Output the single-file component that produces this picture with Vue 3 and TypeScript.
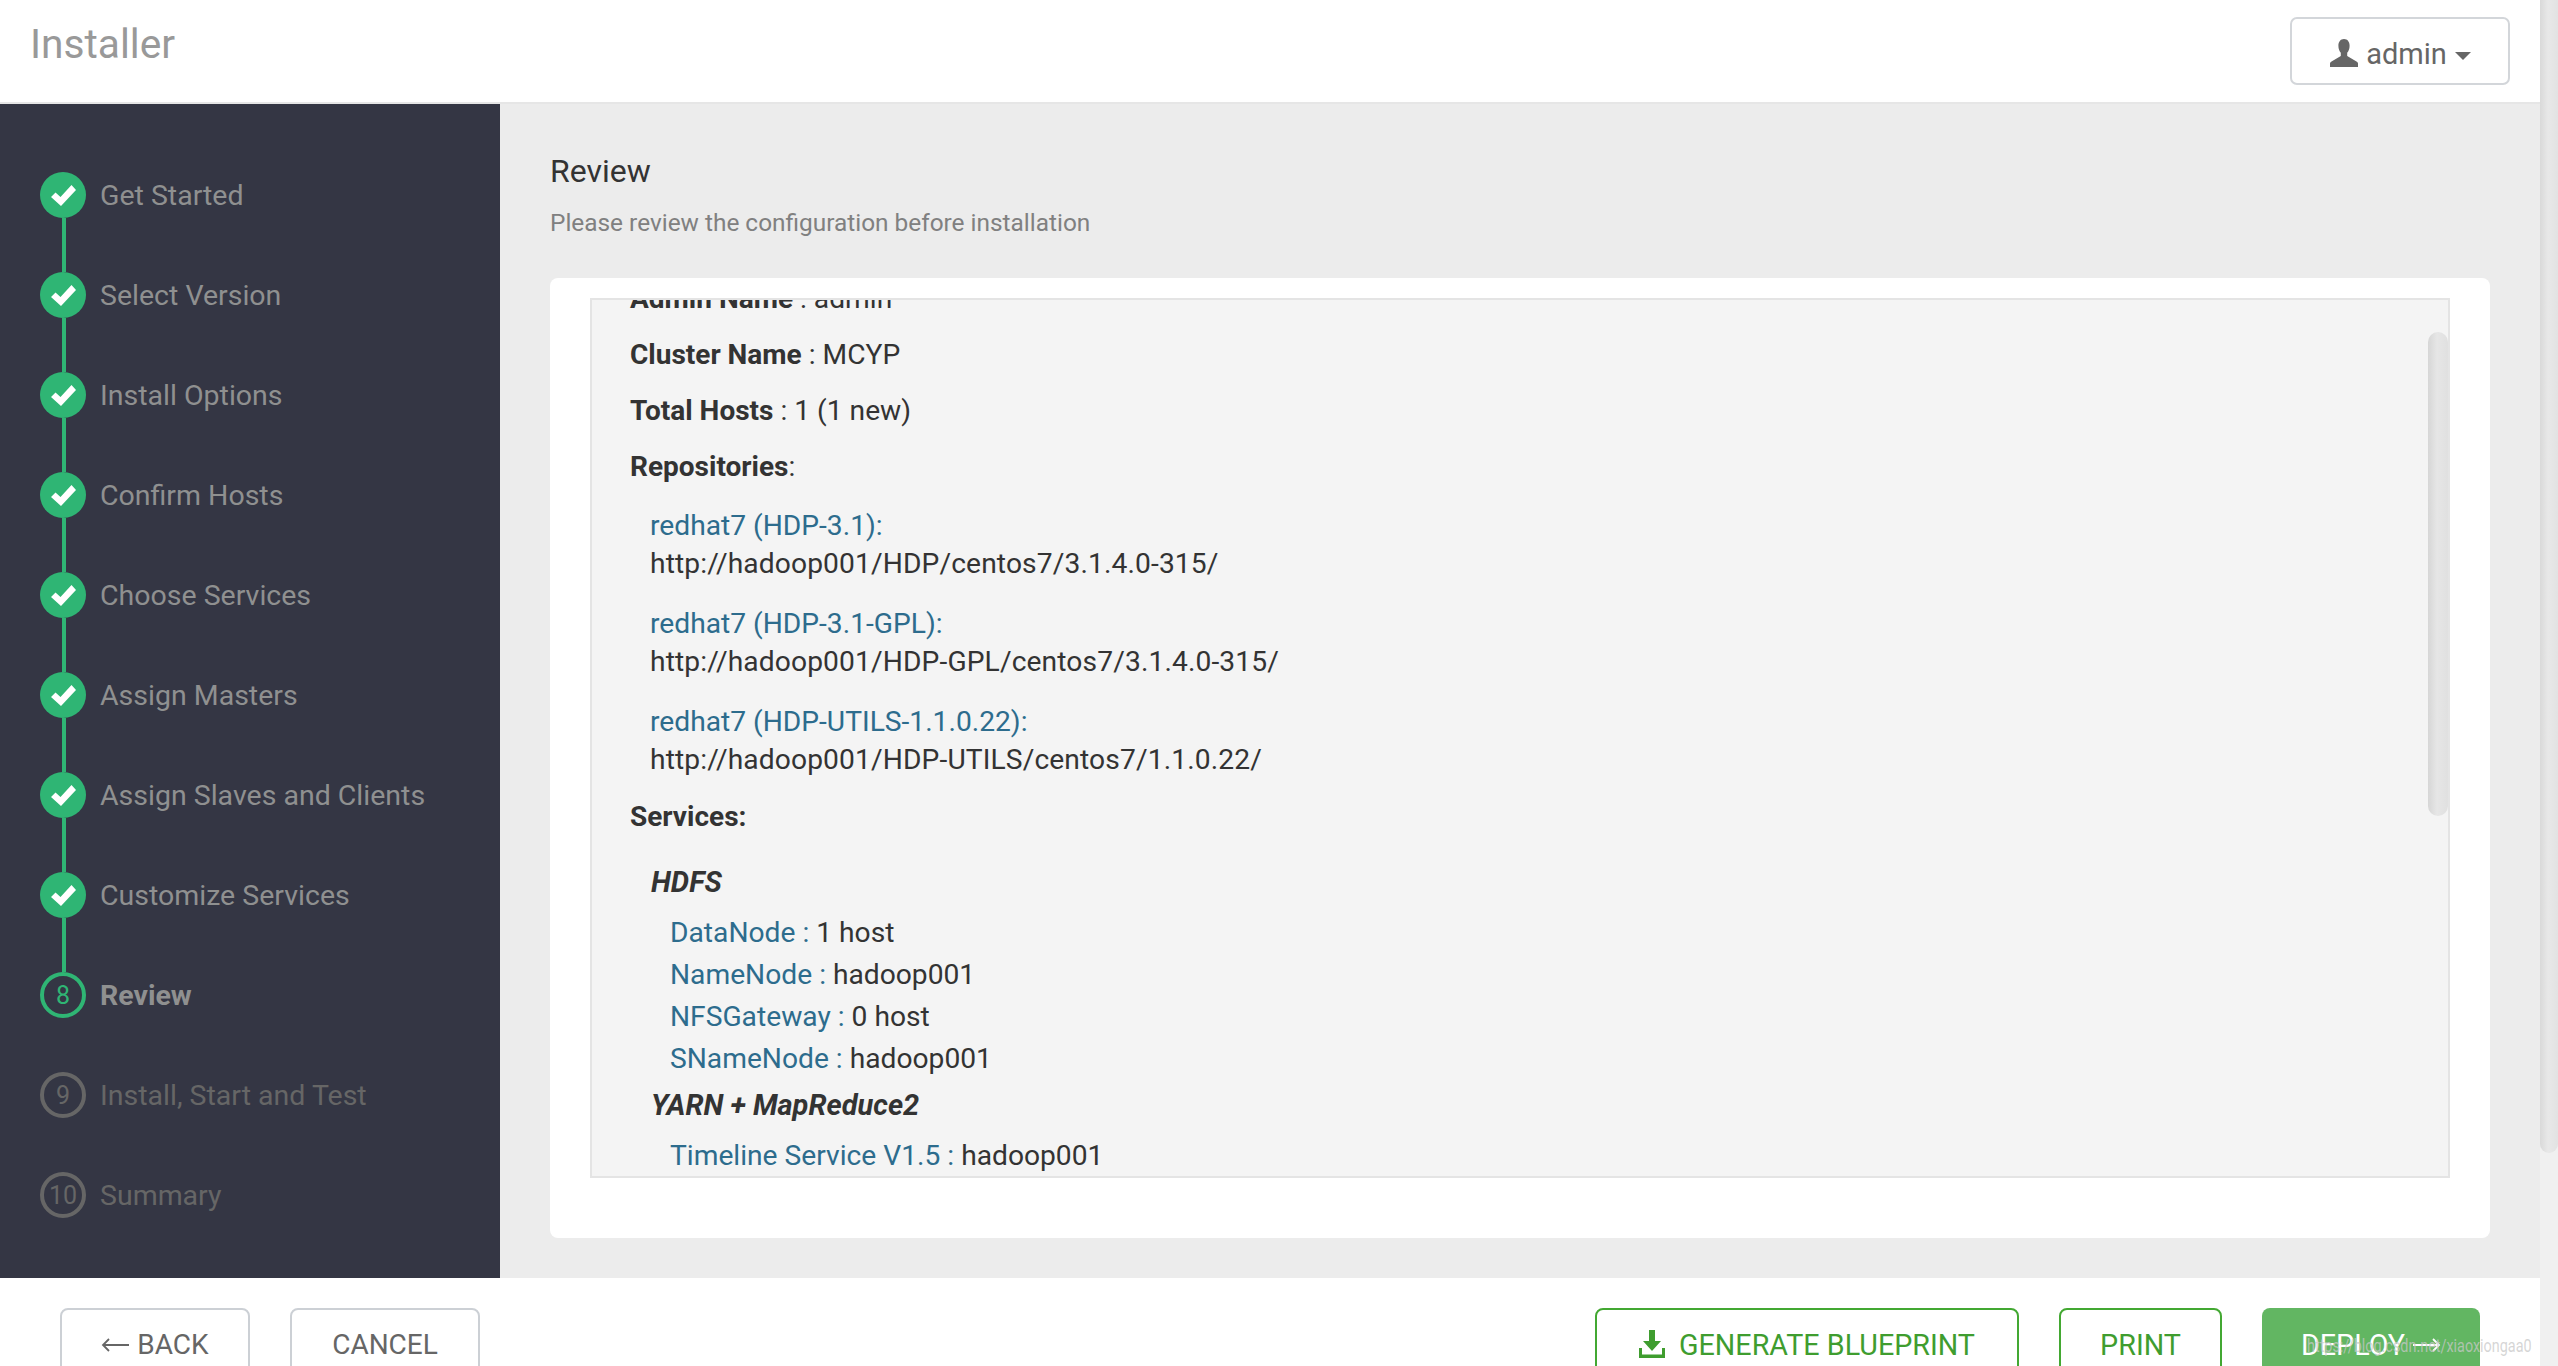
<script setup lang="ts">
interface Step { label: string; state: 'done' | 'current' | 'todo'; num: number }
const doneSteps: string[] = ['Get Started','Select Version','Install Options','Confirm Hosts','Choose Services','Assign Masters','Assign Slaves and Clients','Customize Services']
const steps: Step[] = [
  ...doneSteps.map((label, i): Step => ({ label, state: 'done', num: i + 1 })),
  { label: 'Review', state: 'current', num: 8 },
  { label: 'Install, Start and Test', state: 'todo', num: 9 },
  { label: 'Summary', state: 'todo', num: 10 },
]
const repos = [
  { name: 'redhat7 (HDP-3.1):', url: 'http://hadoop001/HDP/centos7/3.1.4.0-315/' },
  { name: 'redhat7 (HDP-3.1-GPL):', url: 'http://hadoop001/HDP-GPL/centos7/3.1.4.0-315/' },
  { name: 'redhat7 (HDP-UTILS-1.1.0.22):', url: 'http://hadoop001/HDP-UTILS/centos7/1.1.0.22/' },
]
const hdfs = [
  { k: 'DataNode', v: '1 host' },
  { k: 'NameNode', v: 'hadoop001' },
  { k: 'NFSGateway', v: '0 host' },
  { k: 'SNameNode', v: 'hadoop001' },
]
</script>

<template>
  <div class="page">
    <div class="column">
      <header class="top">
        <div class="brand">Installer</div>
        <button class="user">
          <svg class="user-ico" viewBox="0 0 28 28"><path d="M14 0c-3.600 0-5.600 2.800-5.600 6.800 0 3 1 5.400 2.400 7v3.200L1.500 22.500C.5 23 0 23.800 0 24.800V28h28v-3.200c0-1-.5-1.800-1.500-2.300L17.200 17v-3.200c1.400-1.600 2.400-4 2.400-7C19.600 2.800 17.600 0 14 0z" fill="#666"/></svg>
          <span>admin</span>
          <i class="caret"></i>
        </button>
      </header>
      <div class="main">
        <aside class="side">
          <div v-for="(s, i) in steps" :key="s.label" class="step" :class="s.state">
            <div class="dot">
              <svg v-if="s.state === 'done'" class="check" viewBox="0 0 25 23"><path d="M0 13l4.500-4.500 5 4.500L20.500 1 25 6 10 22z" fill="#fff"/></svg>
              <template v-else>{{ s.num }}</template>
            </div>
            <div v-if="i < 8" class="link"></div>
            <span class="label">{{ s.label }}</span>
          </div>
        </aside>
        <section class="content">
          <h2 class="title">Review</h2>
          <p class="sub">Please review the configuration before installation</p>
          <div class="card">
            <div class="box">
              <div class="scroll">
                <p class="row"><b>Admin Name</b> : admin</p>
                <p class="row"><b>Cluster Name</b> : MCYP</p>
                <p class="row"><b>Total Hosts</b> : 1 (1 new)</p>
                <p class="row"><b>Repositories</b>:</p>
                <div class="repos">
                  <div v-for="r in repos" :key="r.name" class="repo">
                    <div class="blue">{{ r.name }}</div>
                    <div class="url">{{ r.url }}</div>
                  </div>
                </div>
                <p class="row svc"><b>Services:</b></p>
                <div class="group">
                  <div class="gname">HDFS</div>
                  <div v-for="h in hdfs" :key="h.k" class="item"><span class="blue">{{ h.k }} : </span>{{ h.v }}</div>
                  <div class="gname second">YARN + MapReduce2</div>
                  <div class="item"><span class="blue">Timeline Service V1.5 : </span>hadoop001</div>
                </div>
              </div>
              <div class="inner-thumb"></div>
            </div>
          </div>
        </section>
      </div>
      <footer class="actions">
        <div class="group-btn">
          <button class="btn plain">
            <svg class="arrow" viewBox="0 0 28 14"><path d="M28 7H3M8 1L2 7l6 6" fill="none" stroke="#666" stroke-width="1.800"/></svg>
            BACK
          </button>
          <button class="btn plain">CANCEL</button>
        </div>
        <div class="group-btn">
          <button class="btn green gen">
            <svg class="save" viewBox="0 0 26 28"><path d="M10 0h6v11h6l-9 10-9-10h6z" fill="#3f9d2f"/><path d="M0 18h3v6.500h20V18h3v10H0z" fill="#3f9d2f"/></svg>
            GENERATE BLUEPRINT
          </button>
          <button class="btn green print">PRINT</button>
          <button class="btn deploy">
            DEPLOY
            <svg class="arrow" viewBox="0 0 28 14"><path d="M0 7h25M20 1l6 6-6 6" fill="none" stroke="#fff" stroke-width="1.800"/></svg>
          </button>
        </div>
      </footer>
    </div>
    <div class="page-bar"><div class="page-thumb"></div></div>
    <div class="mark">https://blog.csdn.net/xiaoxiongaa0</div>
  </div>
</template>

<style>
html, body { margin: 0; overflow: hidden; }
</style>

<style scoped>
.page { display: flex; width: 2558px; height: 1366px; overflow: hidden; position: relative; font-family: Roboto, "Liberation Sans", sans-serif; background: #fff; }
.column { width: 2540px; flex: none; display: flex; flex-direction: column; height: 1366px; }
.top { height: 102px; flex: none; border-bottom: 2px solid #e6e6e6; display: flex; align-items: center; justify-content: space-between; padding: 0 30px; }
.brand { font-size: 40.7px; color: #999; margin-top: -15px; }
.user { width: 220px; height: 68px; background: #fff; border: 2px solid #d3d6da; border-radius: 7px; display: flex; align-items: center; justify-content: center; gap: 8px; font: 29px Roboto, sans-serif; color: #666; padding: 6px 4px 0 2px; }
.user-ico { width: 28px; height: 28px; margin: -2px 0 0 3px; }
.caret { width: 0; height: 0; border-left: 8px solid transparent; border-right: 8px solid transparent; border-top: 8px solid #666; margin-left: 0; margin-top: 4px; }
.main { height: 1174px; flex: none; display: flex; }
.side { width: 500px; flex: none; background: #343644; padding-top: 68px; box-sizing: border-box; }
.step { height: 100px; position: relative; padding-left: 40px; display: flex; align-items: flex-start; font-size: 28.5px; color: #8f9090; }
.dot { width: 46px; height: 46px; border-radius: 50%; box-sizing: border-box; display: flex; align-items: center; justify-content: center; flex: none; font-size: 25px; }
.done .dot { background: #2fb574; }
.check { width: 25px; height: 23px; }
.current .dot { border: 4px solid #2fb574; color: #2fb574; }
.todo .dot { border: 4px solid #666; color: #666; }
.link { position: absolute; left: 62px; top: 46px; width: 4px; height: 54px; background: #2fb574; }
.label { margin-left: 14px; line-height: 46px; white-space: nowrap; padding-top: 1px; }
.current .label { font-weight: 700; }
.todo .label { color: #666; }
.content { flex: 1; background: #ececec; padding: 48px 50px 0; box-sizing: border-box; min-width: 0; }
.title { margin: 0; font-size: 32px; font-weight: 400; color: #333; line-height: 38px; }
.sub { margin: 16px 0 0; font-size: 24.4px; line-height: 34px; color: #808080; }
.card { margin-top: 38px; width: 1940px; height: 960px; background: #fff; border-radius: 8px; padding: 20px 40px 0; box-sizing: border-box; }
.box { width: 1860px; height: 880px; box-sizing: border-box; background: #f4f4f4; border: 2px solid #e4e4e4; overflow: hidden; position: relative; color: #333; font-size: 28.2px; }
.scroll { padding: 0 38px; margin-top: -20px; }
.row { margin: 0 0 19px; line-height: 37px; }
.row b { font-weight: 700; font-size: 28px; }
.blue { color: #2d6c8d; }
.url { letter-spacing: 0.12px; }
.repos { padding-left: 20px; margin-top: 22px; }
.repo { line-height: 38px; margin-bottom: 22px; }
.svc { margin-top: -3px; }
.group { padding-left: 20px; }
.gname { font-weight: 700; font-style: italic; font-size: 29px; line-height: 38px; margin: 28px 0 11px 1px; }
.gname.second { margin: 6px 0 11px 1px; }
.item { padding-left: 20px; line-height: 42px; }
.inner-thumb { position: absolute; right: 0; top: 32px; width: 20px; height: 484px; border-radius: 10px; background: linear-gradient(90deg, #d6d6d6, #e6e6e6 45%, #e0e0e0); }
.actions { flex: 1; display: flex; justify-content: space-between; padding: 30px 60px 0; box-sizing: border-box; background: #fff; min-height: 0; }
.group-btn { display: flex; gap: 40px; align-items: flex-start; }
.btn { height: 76px; box-sizing: border-box; border-radius: 8px; background: #fff; font: 28px Roboto, sans-serif; display: inline-flex; align-items: center; justify-content: center; gap: 8px; padding: 0 0 3px; }
.plain { width: 190px; border: 2px solid #ccd0d5; color: #666; }
.green { border: 2px solid #43a832; color: #3f9d2f; font-size: 28.7px; }
.gen { width: 424px; gap: 14px; }
.print { width: 163px; }
.deploy { width: 218px; border: none; background: #62b662; color: #fff; font-size: 28.7px; }
.arrow { width: 28px; height: 14px; }
.save { width: 26px; height: 28px; margin-bottom: 2px; }
.page-bar { flex: 1; background: #f0f0f0; }
.page-thumb { height: 1153px; border-radius: 0 0 9px 9px; background: linear-gradient(90deg, #d9d9d9, #e8e8e8 45%, #e2e2e2); }
.mark { position: absolute; left: 2307px; top: 1335px; font-size: 18px; color: rgba(200, 200, 200, 0.75); white-space: nowrap; transform: scaleX(0.8); transform-origin: left center; }
</style>
